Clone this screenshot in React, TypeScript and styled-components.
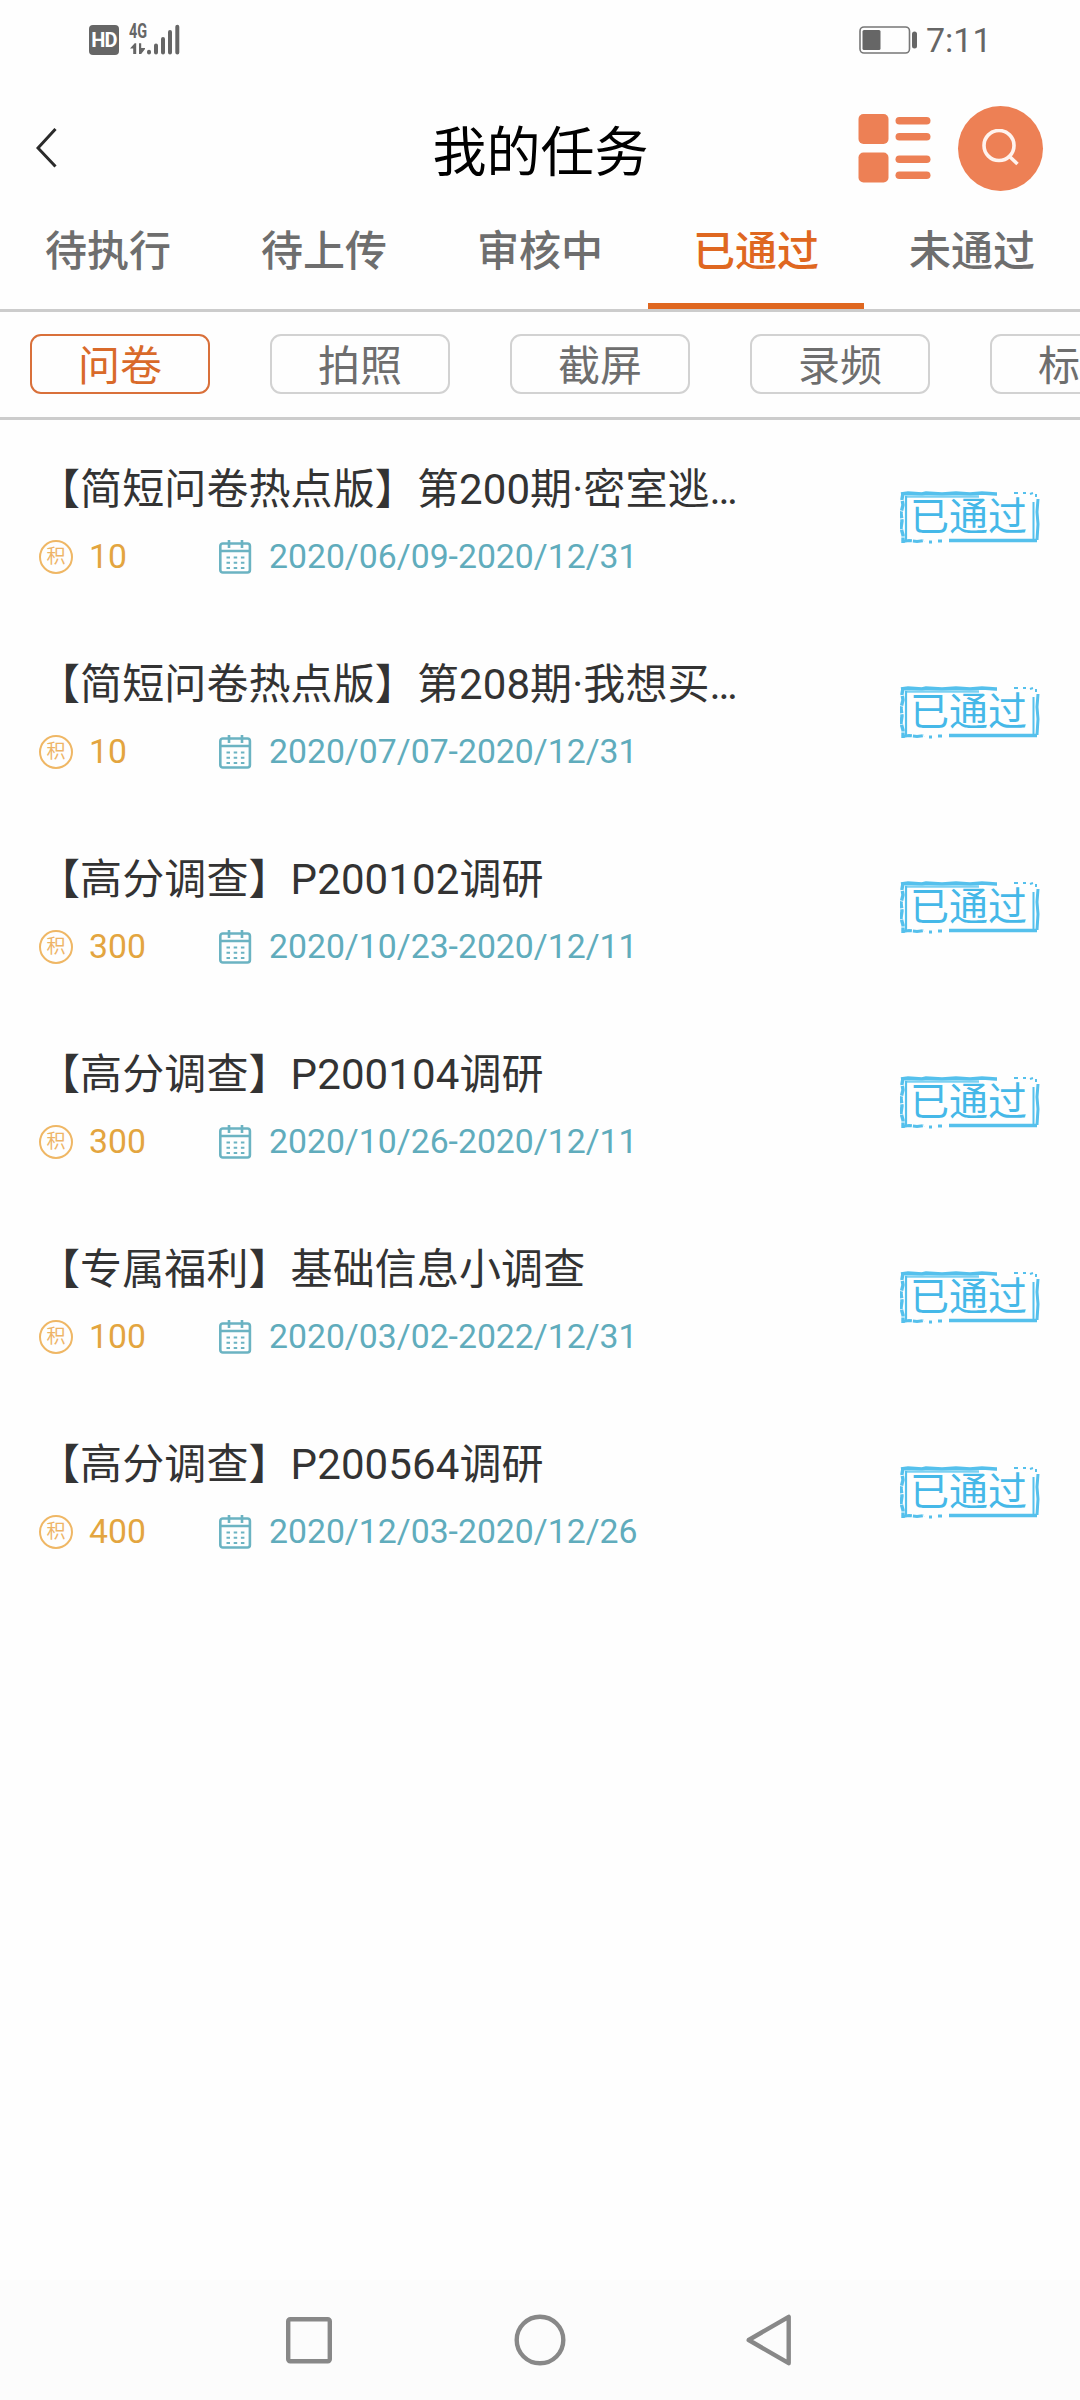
import React from "react";
import styled, { createGlobalStyle } from "styled-components";

const Global = createGlobalStyle`
  * { box-sizing: border-box; }
  body {
    margin: 0;
    background: #fefefe;
    font-family: Roboto, "Noto Sans CJK SC", sans-serif;
  }
  button { font: inherit; color: inherit; background: none; border: 0; padding: 0; margin: 0; }
  svg { display: block; flex: none; }
`;

const Screen = styled.div`
  width: 1080px;
  height: 2400px;
  display: flex;
  flex-direction: column;
  background: #fefefe;
  overflow: hidden;
`;

const StatusBar = styled.div`
  height: 80px;
  padding: 0 94px 0 89px;
  display: flex;
  justify-content: space-between;
  align-items: center;
  color: #666;
`;

const StatusGroup = styled.div<{ $gap: number }>`
  display: flex;
  align-items: center;
  gap: ${(p) => p.$gap}px;
`;

const HdBadge = styled.span`
  width: 30px;
  height: 30px;
  border-radius: 4px;
  background: #666;
  color: #fff;
  font: 700 20px/30px Roboto, sans-serif;
  letter-spacing: -0.8px;
  text-align: center;
`;

const Network = styled.div`
  display: flex;
  align-items: flex-end;
  height: 32px;
`;

const NetworkType = styled.div`
  width: 17px;
  height: 32px;
  display: flex;
  flex-direction: column;
  justify-content: space-between;
`;

const NetworkLabel = styled.span`
  margin-left: -1px;
  font: 700 19.5px/16px Roboto, sans-serif;
  transform: scaleX(0.74);
  transform-origin: left;
`;

const Clock = styled.span`
  width: 60px;
  font-size: 34px;
  line-height: 40px;
  white-space: nowrap;
`;

const Header = styled.header`
  height: 136px;
  padding: 0 37px 0 36px;
  display: grid;
  grid-template-columns: 1fr auto 1fr;
  align-items: center;
`;

const Title = styled.h1`
  margin: 11px 0 0 2px;
  font-size: 54px;
  line-height: 64px;
  font-weight: 400;
  color: #000;
`;

const Actions = styled.div`
  display: flex;
  justify-content: flex-end;
  align-items: center;
  gap: 27px;
`;

const SearchButton = styled.button`
  width: 85px;
  height: 85px;
  border-radius: 50%;
  background: #ed8055;
  display: flex;
  align-items: center;
  justify-content: center;
`;

const Tabs = styled.nav`
  height: 96px;
  display: grid;
  grid-template-columns: repeat(5, 1fr);
  border-bottom: 3px solid #ccc;
`;

const Tab = styled.button<{ $active?: boolean }>`
  padding-bottom: ${(p) => (p.$active ? 16 : 22)}px;
  border-bottom: ${(p) => (p.$active ? "6px solid #df6720" : "0")};
  color: ${(p) => (p.$active ? "#df6720" : "#6e6e6e")};
  font-size: 42px;
  line-height: 50px;
  font-weight: 500;
`;

const Chips = styled.div`
  height: 108px;
  padding: 22px 0 0 30px;
  display: flex;
  gap: 60px;
  overflow: hidden;
  border-bottom: 3px solid #ccc;
`;

const Chip = styled.button<{ $active?: boolean }>`
  flex: 0 0 180px;
  height: 60px;
  padding-top: 5px;
  border: ${(p) => (p.$active ? "2px solid #d9703a" : "2px solid #d2d2d2")};
  border-radius: 11px;
  color: ${(p) => (p.$active ? "#d96a2a" : "#6e6e6e")};
  font-size: 42px;
  line-height: 50px;
`;

const List = styled.main`
  flex: 1;
  display: flex;
  flex-direction: column;
`;

const Row = styled.article`
  height: 195px;
  padding: 0 40px 0 39px;
  display: flex;
  justify-content: space-between;
  align-items: center;
`;

const RowBody = styled.div`
  padding-top: 3px;
`;

const RowTitle = styled.h2`
  width: 702px;
  margin: 0 0 19px -1px;
  font-size: 42px;
  line-height: 56px;
  letter-spacing: 0.1px;
  font-weight: 400;
  color: #333;
  white-space: nowrap;
  overflow: hidden;
  text-overflow: ellipsis;
`;

const Meta = styled.div`
  display: grid;
  grid-template-columns: 180px auto;
  justify-content: start;
  font-size: 33.75px;
  line-height: 40px;
`;

const Points = styled.span`
  display: flex;
  align-items: center;
  gap: 16px;
  color: #e3a53f;
`;

const Coin = styled.span`
  width: 34px;
  height: 34px;
  border: 2px solid #efb765;
  border-radius: 50%;
  color: #eeb466;
  font-size: 19px;
  line-height: 29px;
  text-align: center;
`;

const Dates = styled.span`
  display: flex;
  align-items: center;
  gap: 17px;
  color: #60acbc;
`;

const Stamp = styled.div`
  width: 140px;
  height: 54px;
  display: grid;
  & > * { grid-area: 1 / 1; }
`;

const StampText = styled.span`
  padding-left: 10px;
  font-size: 39px;
  line-height: 53px;
  font-weight: 400;
  white-space: nowrap;
  color: #45b8e8;
`;

const NavBar = styled.footer`
  height: 120px;
  padding: 0 282px 0 283px;
  display: flex;
  align-items: center;
  justify-content: space-between;
  background: #fcfcfc;
`;

const SignalBars = () => (
  <svg width="33" height="32" viewBox="0 0 33 32" stroke="#666" strokeWidth="4" strokeLinecap="round">
    <path d="M2 27.8V28.4M9 21.5V28.5M16 15V28.5M23 8V28.5M30.3 2.7V28.5" />
  </svg>
);

const DataArrows = () => (
  <svg width="17" height="13" viewBox="0 0 17 13" fill="#666">
    <path d="M0 5.5 4.7.2H6.2V11H3.2V5.5ZM9 .2H11.2V5H15v1l-3.8 5H9Z" />
  </svg>
);

const Battery = () => (
  <svg width="59" height="28" viewBox="0 0 59 28" fill="none">
    <rect x="1" y="1" width="49.5" height="26" rx="4" stroke="#777" strokeWidth="1.6" />
    <rect x="3.5" y="4" width="18" height="20" rx="1.5" fill="#666" />
    <rect x="53" y="5.5" width="5" height="17" rx="2.5" fill="#666" />
  </svg>
);

const BackIcon = () => (
  <svg width="22" height="40" viewBox="0 0 22 40" fill="none" stroke="#2b2b2b" strokeWidth="3">
    <path d="M19.5 1 2 20l17.5 18.5" />
  </svg>
);

const ListIcon = () => (
  <svg width="73" height="70" viewBox="0 0 73 70" fill="#ed8055">
    <rect x="0.5" y="1" width="30" height="30" rx="5" />
    <rect x="0.5" y="39.5" width="30" height="30" rx="5" />
    <rect x="37.5" y="4" width="35" height="7.6" rx="3.8" />
    <rect x="37.5" y="20" width="35" height="7.6" rx="3.8" />
    <rect x="37.5" y="42.5" width="35" height="7.6" rx="3.8" />
    <rect x="37.5" y="58.5" width="35" height="7.6" rx="3.8" />
  </svg>
);

const SearchIcon = () => (
  <svg width="38" height="38" viewBox="0 0 38 38" fill="none" stroke="#fff3ee" strokeWidth="3.6">
    <circle cx="17" cy="16.5" r="15" />
    <path d="M27.5 27.5 35.5 35" />
  </svg>
);

const CalendarIcon = () => (
  <svg width="33" height="36" viewBox="0 0 33 36" fill="none" stroke="#6bb3c2" strokeWidth="2.6">
    <rect x="1.3" y="4.5" width="29.6" height="29" rx="2.5" />
    <path d="M1.5 12H31M10 1v8M23 1v8" />
    <path d="M7.5 18.5h18M7.5 23.8h18M7.5 29h18" strokeWidth="2" strokeDasharray="3.5 3.7" />
  </svg>
);

const StampFrame = () => (
  <svg width="140" height="54" viewBox="0 0 140 54" fill="none" stroke="#55c0ec">
    <path d="M1 3 8 2l14 1 4-1 16 1 14-1 14 1 12-1 14 1H97" strokeWidth="3.6" />
    <path d="M5 5.5H79" stroke="#7bd0f2" strokeWidth="2.4" />
    <path d="M114 2h4M123 2h3M130 3l3-1M136 3v3" strokeWidth="2" />
    <path d="M3 2 2 8l1 6-2 8 1 8-1 7 2 7v8" strokeWidth="3.4" strokeDasharray="7 1 10 .7" />
    <path d="M6 5V49" strokeWidth="2.2" />
    <path d="M2 50.5l7-1 8 1 7-1M29 51h3M38 50h4" strokeWidth="3" strokeDasharray="10 1" />
    <path d="M49 49.5H137" strokeWidth="3.6" />
    <path d="M133.5 11V48" strokeWidth="2" />
    <path d="M138 8 137 21l1 12-1 16" strokeWidth="3" />
  </svg>
);

const tabs = ["待执行", "待上传", "审核中", "已通过", "未通过"];
const chips = ["问卷", "拍照", "截屏", "录频", "标签"];
const tasks = [
  { title: "【简短问卷热点版】第200期·密室逃…", points: 10, dates: "2020/06/09-2020/12/31" },
  { title: "【简短问卷热点版】第208期·我想买…", points: 10, dates: "2020/07/07-2020/12/31" },
  { title: "【高分调查】P200102调研", points: 300, dates: "2020/10/23-2020/12/11" },
  { title: "【高分调查】P200104调研", points: 300, dates: "2020/10/26-2020/12/11" },
  { title: "【专属福利】基础信息小调查", points: 100, dates: "2020/03/02-2022/12/31" },
  { title: "【高分调查】P200564调研", points: 400, dates: "2020/12/03-2020/12/26" },
];

export default function App() {
  return (
    <Screen>
      <Global />
      <StatusBar>
        <StatusGroup $gap={11}>
          <HdBadge>HD</HdBadge>
          <Network>
            <NetworkType>
              <NetworkLabel>4G</NetworkLabel>
              <DataArrows />
            </NetworkType>
            <SignalBars />
          </Network>
        </StatusGroup>
        <StatusGroup $gap={8}>
          <Battery />
          <Clock>7:11</Clock>
        </StatusGroup>
      </StatusBar>
      <Header>
        <BackIcon />
        <Title>我的任务</Title>
        <Actions>
          <ListIcon />
          <SearchButton>
            <SearchIcon />
          </SearchButton>
        </Actions>
      </Header>
      <Tabs>
        {tabs.map((t) => (
          <Tab key={t} $active={t === "已通过"}>
            {t}
          </Tab>
        ))}
      </Tabs>
      <Chips>
        {chips.map((c) => (
          <Chip key={c} $active={c === "问卷"}>
            {c}
          </Chip>
        ))}
      </Chips>
      <List>
        {tasks.map((t) => (
          <Row key={t.title}>
            <RowBody>
              <RowTitle>{t.title}</RowTitle>
              <Meta>
                <Points>
                  <Coin>积</Coin>
                  {t.points}
                </Points>
                <Dates>
                  <CalendarIcon />
                  {t.dates}
                </Dates>
              </Meta>
            </RowBody>
            <Stamp>
              <StampFrame />
              <StampText>已通过</StampText>
            </Stamp>
          </Row>
        ))}
      </List>
      <NavBar>
        <svg width="52" height="54" viewBox="0 0 52 54" fill="none" stroke="#888" strokeWidth="4.4">
          <rect x="5.2" y="6.2" width="41.6" height="42" rx="2" />
        </svg>
        <svg width="54" height="54" viewBox="0 0 54 54" fill="none" stroke="#888" strokeWidth="4.4">
          <circle cx="27" cy="27" r="23.3" />
        </svg>
        <svg width="54" height="54" viewBox="0 0 54 54" fill="none" stroke="#888" strokeWidth="4.4" strokeLinejoin="round">
          <path d="M44.7 3.8V50.2L4.7 27Z" />
        </svg>
      </NavBar>
    </Screen>
  );
}
